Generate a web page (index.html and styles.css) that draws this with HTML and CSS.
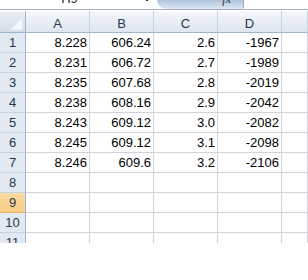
FILE: index.html
```html
<!DOCTYPE html>
<html>
<head>
<meta charset="utf-8">
<link rel="stylesheet" href="styles.css">
</head>
<body>
<div class="fbar">
  <div class="namebox"><span class="nametext">H9</span><span class="dd"></span></div>
  <div class="fxbtn"><span class="fx">fx</span></div>
  <div class="finput"></div>
</div>
<div class="sheet">
  <div class="corner"><svg width="26" height="23" viewBox="0 0 26 23"><polygon points="22,8 22,20 10,20" fill="#f3f6fa"/></svg></div>
  <div class="ch">A</div><div class="ch">B</div><div class="ch">C</div><div class="ch">D</div><div class="ch"></div>

  <div class="rh">1</div><div class="c">8.228</div><div class="c">606.24</div><div class="c">2.6</div><div class="c">-1967</div><div class="c"></div>
  <div class="rh">2</div><div class="c">8.231</div><div class="c">606.72</div><div class="c">2.7</div><div class="c">-1989</div><div class="c"></div>
  <div class="rh">3</div><div class="c">8.235</div><div class="c">607.68</div><div class="c">2.8</div><div class="c">-2019</div><div class="c"></div>
  <div class="rh">4</div><div class="c">8.238</div><div class="c">608.16</div><div class="c">2.9</div><div class="c">-2042</div><div class="c"></div>
  <div class="rh">5</div><div class="c">8.243</div><div class="c">609.12</div><div class="c">3.0</div><div class="c">-2082</div><div class="c"></div>
  <div class="rh">6</div><div class="c">8.245</div><div class="c">609.12</div><div class="c">3.1</div><div class="c">-2098</div><div class="c"></div>
  <div class="rh">7</div><div class="c">8.246</div><div class="c">609.6</div><div class="c">3.2</div><div class="c">-2106</div><div class="c"></div>
  <div class="rh">8</div><div class="c"></div><div class="c"></div><div class="c"></div><div class="c"></div><div class="c"></div>
  <div class="rh sel">9</div><div class="c"></div><div class="c"></div><div class="c"></div><div class="c"></div><div class="c"></div>
  <div class="rh">10</div><div class="c"></div><div class="c"></div><div class="c"></div><div class="c"></div><div class="c"></div>
  <div class="rh">11</div><div class="c"></div><div class="c"></div><div class="c"></div><div class="c"></div><div class="c"></div>
</div>
</body>
</html>
```

FILE: styles.css
```css
* { box-sizing: border-box; }
html, body { margin: 0; padding: 0; background: #fff; }
body {
  width: 308px;
  height: 280px;
  overflow: hidden;
  font-family: "Liberation Sans", Arial, sans-serif;
  font-size: 13px;
  color: #111;
}
.fbar {
  display: flex;
  height: 10px;
  border-bottom: 1px solid #a7b3c2;
  overflow: hidden;
  background: #fff;
}
.namebox {
  width: 153px;
  display: flex;
  justify-content: center;
  position: relative;
}
.nametext {
  display: block;
  line-height: 20px;
  margin-top: -11px;
  margin-left: -14px;
  color: #222;
}
.dd {
  position: absolute;
  left: 146px;
  top: 0;
  width: 2px;
  height: 1px;
  background: #333;
}
.fxbtn {
  margin-left: 4px;
  width: 87px;
  border-radius: 0 0 4px 22px;
  background: linear-gradient(#aec3de, #cbd9ea 60%, #dde7f3);
  display: flex;
  justify-content: flex-end;
  border-right: 1px solid #9aaac0;
}
.fx {
  font-family: "Liberation Serif", serif;
  font-style: italic;
  font-size: 12px;
  line-height: 20px;
  margin-top: -11px;
  margin-right: 12px;
  color: #333;
}
.finput { flex: 1; background: #fff; }
.sheet {
  display: grid;
  grid-template-columns: 26px 64px 64px 64px 64px 1fr;
  grid-template-rows: 23px;
  grid-auto-rows: 20px;
  height: 233px;
  overflow: hidden;
}
.corner {
  background: linear-gradient(#e8eef6, #d2dce8);
  border-right: 1px solid #9eb6ce;
  border-bottom: 1px solid #9eb6ce;
  border-top: 2px solid #fafcfe;
}
.corner svg { display: block; margin-top: -2px; }
.ch {
  background: linear-gradient(#f4f7fb, #dde5ef);
  border-top: 2px solid #fbfcfe;
  border-right: 1px solid #c4d1df;
  border-bottom: 1px solid #9eb6ce;
  text-align: center;
  padding-top: 3px;
  line-height: 17px;
  color: #27354a;
}
.rh {
  background: #e2e9f3;
  border-right: 1px solid #9eb6ce;
  border-bottom: 1px solid #c5d3e3;
  text-align: center;
  line-height: 18px;
  padding-top: 1px;
  color: #27354a;
}
.rh.sel {
  background: linear-gradient(#fbdca4, #f7cd80);
  border-bottom-color: #e3b463;
}
.c {
  border-right: 1px solid #d0d4da;
  border-bottom: 1px solid #d0d4da;
  text-align: right;
  padding-right: 2px;
  padding-top: 1px;
  line-height: 18px;
  white-space: nowrap;
  color: #000;
}
```
